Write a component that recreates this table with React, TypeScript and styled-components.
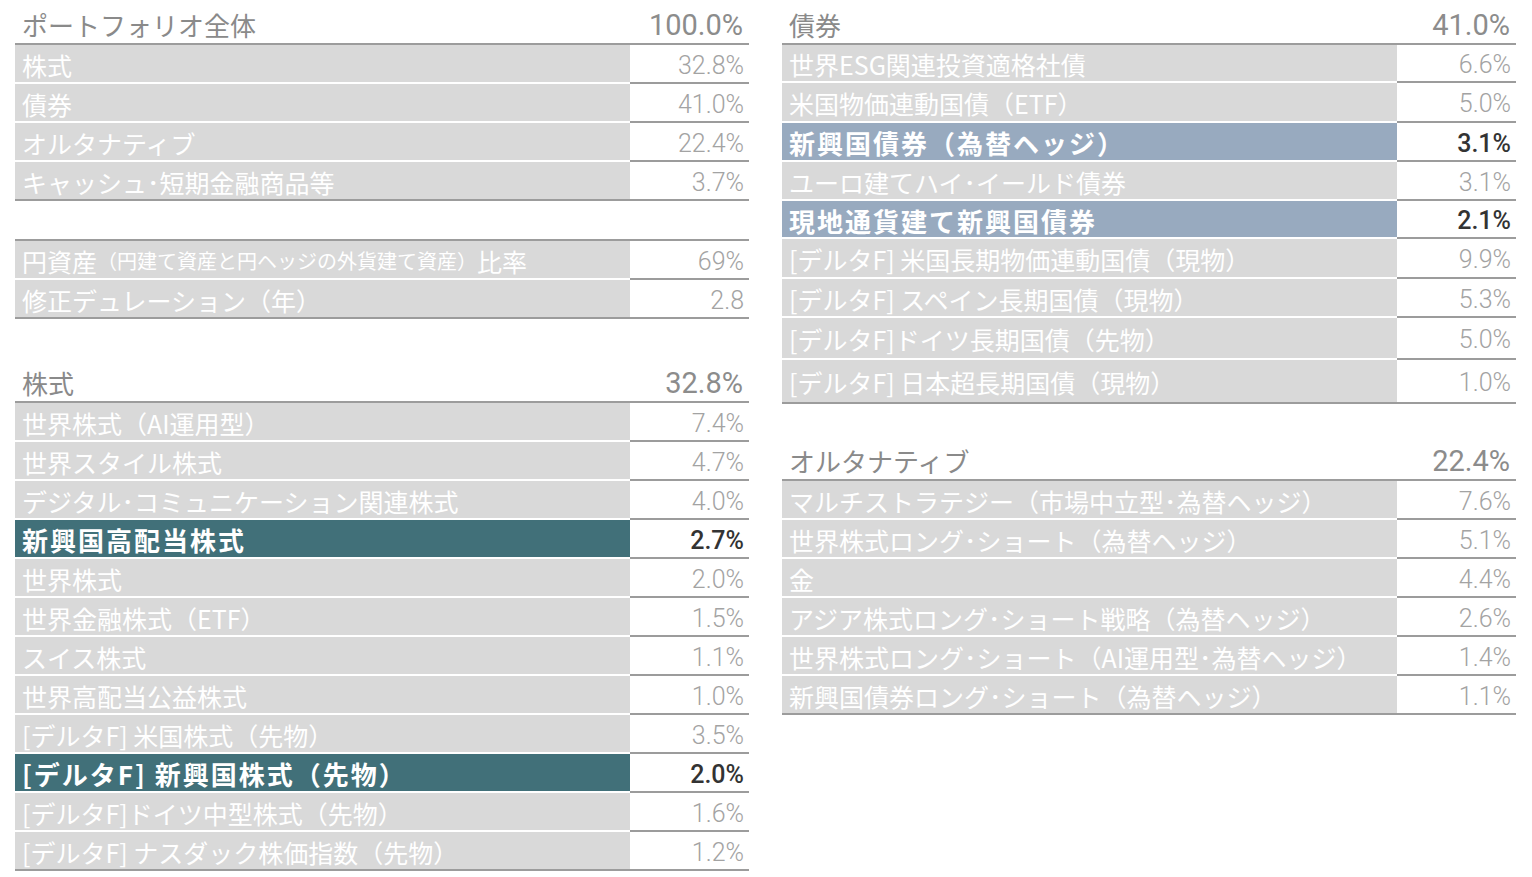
import React from "react";
import styled, { createGlobalStyle } from "styled-components";

const Global = createGlobalStyle`
  *, *::before, *::after { box-sizing: border-box; }
  html, body { margin: 0; padding: 0; background: #fff; }
  body { font-family: "Noto Sans CJK JP", "Noto Sans", sans-serif; }
`;

type Tone = "plain" | "teal" | "blue";
type Row = { label: React.ReactNode; value: string; tone?: Tone; h?: number };

const Page = styled.div`
  display: flex;
  gap: 33px;
  padding-left: 15px;
  width: 1532px;
`;

const Column = styled.div`
  width: 734px;
  display: flex;
  flex-direction: column;
`;

const Block = styled.section<{ $mt?: number; $topLine?: boolean }>`
  margin-top: ${(p) => p.$mt ?? 0}px;
  border-top: ${(p) => (p.$topLine ? "2px solid #9c9c9c" : "none")};
  display: flex;
  flex-direction: column;
`;

const Header = styled.div`
  height: 45px;
  border-bottom: 2px solid #9c9c9c;
  display: flex;
  align-items: flex-end;
  justify-content: space-between;
  padding: 0 6px 2px 7px;
  color: #8a8a8a;
`;

const HeaderTitle = styled.span`
  font-size: 26px;
  line-height: 32px;
`;

const Num = styled.span<{ $size: number; $bold?: boolean }>`
  font-family: "Roboto", "Liberation Sans", sans-serif;
  font-size: ${(p) => p.$size}px;
  font-weight: ${(p) => (p.$bold ? 500 : 300)};
  line-height: 1;
`;

const HeaderNum = styled(Num)`
  line-height: 32px;
  color: #8c8c8c;
  font-weight: 400;
`;

const RowWrap = styled.div<{ $h: number; $last?: boolean }>`
  display: grid;
  grid-template-columns: 615px 119px;
  grid-template-rows: 100%;
  height: ${(p) => p.$h + (p.$last ? 2 : 0)}px;
  border-bottom: ${(p) => (p.$last ? "2px solid #9c9c9c" : "none")};
`;

const bg = (t: Tone) =>
  t === "teal" ? "#417079" : t === "blue" ? "#98aabf" : "#d9d9d9";

const Label = styled.div<{ $tone: Tone; $last?: boolean }>`
  background: ${(p) => bg(p.$tone)};
  border-bottom: ${(p) => (p.$last ? "0" : "2px solid #fff")};
  color: #fff;
  display: flex;
  align-items: center;
  padding: 3px 0 0 7px;
  font-size: ${(p) => (p.$tone === "plain" ? 25 : 26)}px;
  line-height: 1;
  font-weight: ${(p) => (p.$tone === "plain" ? 400 : 700)};
  letter-spacing: ${(p) => (p.$tone === "plain" ? "0px" : "2px")};
  white-space: nowrap;
  overflow: hidden;
`;

const Value = styled.div<{ $tone: Tone; $last?: boolean }>`
  border-bottom: ${(p) => (p.$last ? "0" : "2px solid #9c9c9c")};
  display: flex;
  align-items: center;
  justify-content: flex-end;
  padding: 3px 5px 0 0;
  color: ${(p) => (p.$tone === "plain" ? "#a3a3a3" : "#333")};
`;

const Small = styled.span`
  font-size: 20px;
`;

function Table({
  title,
  total,
  rows,
  mt,
  topLine,
}: {
  title?: string;
  total?: string;
  rows: Row[];
  mt?: number;
  topLine?: boolean;
}) {
  return (
    <Block $mt={mt} $topLine={topLine}>
      {title && (
        <Header>
          <HeaderTitle>{title}</HeaderTitle>
          <HeaderNum $size={29}>{total}</HeaderNum>
        </Header>
      )}
      {rows.map((r, i) => {
        const tone = r.tone ?? "plain";
        const last = i === rows.length - 1;
        return (
          <RowWrap key={i} $h={r.h ?? 39} $last={last}>
            <Label $tone={tone} $last={last}>
              {r.label}
            </Label>
            <Value $tone={tone} $last={last}>
              <Num $size={25} $bold={tone !== "plain"}>
                {r.value}
              </Num>
            </Value>
          </RowWrap>
        );
      })}
    </Block>
  );
}

const overall: Row[] = [
  { label: "株式", value: "32.8%" },
  { label: "債券", value: "41.0%" },
  { label: "オルタナティブ", value: "22.4%" },
  { label: "キャッシュ･短期金融商品等", value: "3.7%", h: 37 },
];

const extra: Row[] = [
  {
    label: (
      <>
        円資産<Small>（円建て資産と円ヘッジの外貨建て資産）</Small>比率
      </>
    ),
    value: "69%",
  },
  { label: "修正デュレーション（年）", value: "2.8", h: 37 },
];

const stocks: Row[] = [
  { label: "世界株式（AI運用型）", value: "7.4%" },
  { label: "世界スタイル株式", value: "4.7%" },
  { label: "デジタル･コミュニケーション関連株式", value: "4.0%" },
  { label: "新興国高配当株式", value: "2.7%", tone: "teal" },
  { label: "世界株式", value: "2.0%" },
  { label: "世界金融株式（ETF）", value: "1.5%" },
  { label: "スイス株式", value: "1.1%" },
  { label: "世界高配当公益株式", value: "1.0%" },
  { label: "[デルタF] 米国株式（先物）", value: "3.5%" },
  { label: "[デルタF] 新興国株式（先物）", value: "2.0%", tone: "teal" },
  { label: "[デルタF]ドイツ中型株式（先物）", value: "1.6%" },
  { label: "[デルタF] ナスダック株価指数（先物）", value: "1.2%", h: 37 },
];

const bonds: Row[] = [
  { label: "世界ESG関連投資適格社債", value: "6.6%", h: 38 },
  { label: "米国物価連動国債（ETF）", value: "5.0%", h: 40 },
  { label: "新興国債券（為替ヘッジ）", value: "3.1%", tone: "blue" },
  { label: "ユーロ建てハイ･イールド債券", value: "3.1%" },
  { label: "現地通貨建て新興国債券", value: "2.1%", tone: "blue", h: 38 },
  { label: "[デルタF] 米国長期物価連動国債（現物）", value: "9.9%", h: 40 },
  { label: "[デルタF] スペイン長期国債（現物）", value: "5.3%" },
  { label: "[デルタF]ドイツ長期国債（先物）", value: "5.0%", h: 42 },
  { label: "[デルタF] 日本超長期国債（現物）", value: "1.0%", h: 42 },
];

const alts: Row[] = [
  { label: "マルチストラテジー（市場中立型･為替ヘッジ）", value: "7.6%" },
  { label: "世界株式ロング･ショート（為替ヘッジ）", value: "5.1%" },
  { label: "金", value: "4.4%" },
  { label: "アジア株式ロング･ショート戦略（為替ヘッジ）", value: "2.6%" },
  { label: "世界株式ロング･ショート（AI運用型･為替ヘッジ）", value: "1.4%" },
  { label: "新興国債券ロング･ショート（為替ヘッジ）", value: "1.1%", h: 37 },
];

export default function App() {
  return (
    <>
      <Global />
      <Page>
        <Column>
          <Table title="ポートフォリオ全体" total="100.0%" rows={overall} />
          <Table rows={extra} mt={38} topLine />
          <Table title="株式" total="32.8%" rows={stocks} mt={39} />
        </Column>
        <Column>
          <Table title="債券" total="41.0%" rows={bonds} />
          <Table title="オルタナティブ" total="22.4%" rows={alts} mt={32} />
        </Column>
      </Page>
    </>
  );
}
